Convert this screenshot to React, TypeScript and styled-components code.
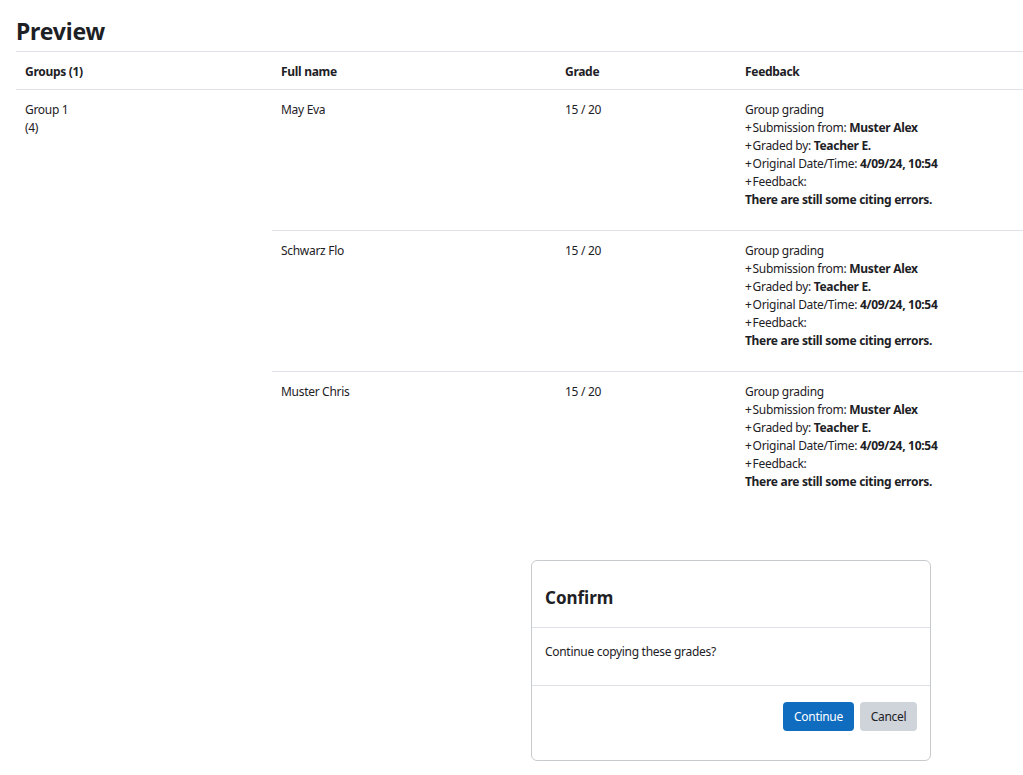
import React from 'react';
import styled, { createGlobalStyle } from 'styled-components';

const GlobalStyle = createGlobalStyle`
  html, body {
    margin: 0;
    padding: 0;
    background: #fff;
  }
  body {
    font-family: "Noto Sans", "Liberation Sans", sans-serif;
    font-size: 12px;
    letter-spacing: -0.3px;
    color: #1d2125;
  }
`;

interface Student {
  name: string;
  grade: string;
}

const students: Student[] = [
  { name: 'May Eva', grade: '15 / 20' },
  { name: 'Schwarz Flo', grade: '15 / 20' },
  { name: 'Muster Chris', grade: '15 / 20' },
];

export default function App() {
  return (
    <Page>
      <GlobalStyle />
      <Title>Preview</Title>
      <Table>
        <thead>
          <tr>
            <Th style={{ width: 256 }}>Groups (1)</Th>
            <Th style={{ width: 284 }}>Full name</Th>
            <Th style={{ width: 180 }}>Grade</Th>
            <Th>Feedback</Th>
          </tr>
        </thead>
        <tbody>
          {students.map((s, i) => (
            <tr key={s.name}>
              {i === 0 && (
                <GroupCell rowSpan={students.length}>
                  Group 1
                  <br />
                  (4)
                </GroupCell>
              )}
              <Td $first={i === 0}>{s.name}</Td>
              <Td $first={i === 0}>{s.grade}</Td>
              <Td $first={i === 0}>
                <Feedback>
                  <div>Group grading</div>
                  <div><Plus>+</Plus>Submission from: <b>Muster Alex</b></div>
                  <div><Plus>+</Plus>Graded by: <b>Teacher E.</b></div>
                  <div><Plus>+</Plus>Original Date/Time: <b>4/09/24, 10:54</b></div>
                  <div><Plus>+</Plus>Feedback:</div>
                  <div><b>There are still some citing errors.</b></div>
                </Feedback>
              </Td>
            </tr>
          ))}
        </tbody>
      </Table>

      <Modal>
        <ModalHeader>
          <ModalTitle>Confirm</ModalTitle>
        </ModalHeader>
        <ModalBody>Continue copying these grades?</ModalBody>
        <ModalFooter>
          <Button $primary>Continue</Button>
          <Button>Cancel</Button>
        </ModalFooter>
      </Modal>
    </Page>
  );
}

const Page = styled.div`
  position: relative;
  width: 1023px;
  height: 775px;
  padding: 0 0 0 16px;
  box-sizing: border-box;
  overflow: hidden;
`;

const Title = styled.h2`
  margin: 0;
  padding-top: 15px;
  height: 51px;
  box-sizing: border-box;
  font-size: 23px;
  line-height: 32px;
  font-weight: 700;
  letter-spacing: -0.2px;
`;

const Table = styled.table`
  width: 1007px;
  border-collapse: collapse;
  table-layout: fixed;
`;

const Th = styled.th`
  text-align: left;
  font-weight: 700;
  padding: 10px 9px 8px;
  height: 38px;
  box-sizing: border-box;
  border-top: 1px solid #dee2e6;
  border-bottom: 1px solid #dee2e6;
  vertical-align: middle;
  line-height: 18px;
`;

const Td = styled.td<{ $first?: boolean }>`
  vertical-align: top;
  padding: 11px 9px 0;
  height: 141px;
  box-sizing: border-box;
  line-height: 18px;
  border-top: ${(p) => (p.$first ? 'none' : '1px solid #dee2e6')};
`;

const GroupCell = styled.td`
  vertical-align: top;
  padding: 11px 9px 0;
  line-height: 18px;
`;

const Feedback = styled.div`
  line-height: 18px;
  b {
    font-weight: 700;
  }
`;

const Plus = styled.span`
  margin-right: 1px;
`;

const Modal = styled.div`
  position: absolute;
  left: 531px;
  top: 560px;
  width: 400px;
  height: 201px;
  box-sizing: border-box;
  border: 1px solid #c8cbce;
  border-radius: 6px;
  background: #fff;
  display: flex;
  flex-direction: column;
`;

const ModalHeader = styled.div`
  height: 67px;
  box-sizing: border-box;
  border-bottom: 1px solid #dee2e6;
  display: flex;
  align-items: center;
  padding: 6px 13px 0;
`;

const ModalTitle = styled.h5`
  margin: 0;
  font-size: 17px;
  font-weight: 700;
  letter-spacing: 0;
`;

const ModalBody = styled.div`
  height: 58px;
  box-sizing: border-box;
  border-bottom: 1px solid #dee2e6;
  padding: 15px 13px 0;
  line-height: 18px;
`;

const ModalFooter = styled.div`
  flex: 1;
  display: flex;
  justify-content: flex-end;
  align-items: flex-start;
  gap: 6px;
  padding: 16px 13px 0;
`;

const Button = styled.button<{ $primary?: boolean }>`
  font-family: inherit;
  font-size: 12px;
  letter-spacing: -0.3px;
  width: ${(p) => (p.$primary ? '71px' : '57px')};
  height: 29px;
  padding: 0;
  border: none;
  border-radius: 4px;
  background: ${(p) => (p.$primary ? '#0f6cbf' : '#ced4da')};
  color: ${(p) => (p.$primary ? '#fff' : '#1d2125')};
`;
